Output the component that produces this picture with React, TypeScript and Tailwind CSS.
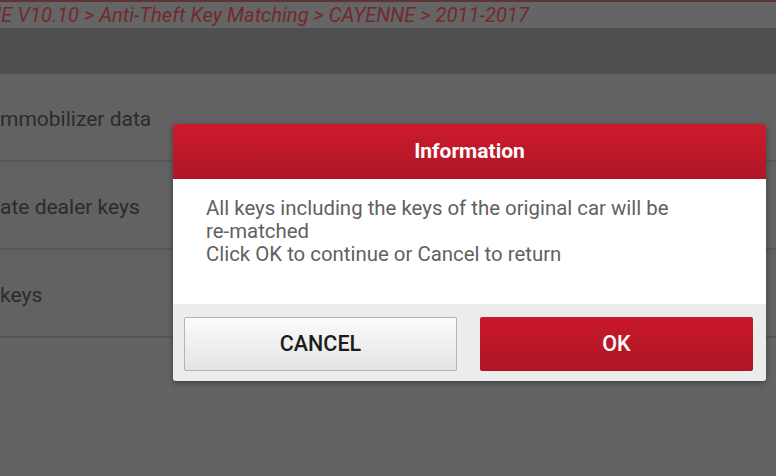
import React from "react";

const rows = ["mmobilizer data", "ate dealer keys", "keys"];

export default function App() {
  return (
    <div
      className="relative h-[476px] w-[776px] overflow-hidden bg-[#636363]"
      style={{ fontFamily: "Roboto, 'Liberation Sans', sans-serif" }}
    >
      {/* top border */}
      <div className="h-[2px] bg-[#5c3434]" />
      {/* breadcrumb bar */}
      <div className="flex h-[26px] items-center overflow-hidden whitespace-nowrap bg-[#656565]">
        <span className="ml-[-4px] text-[20.2px] italic leading-none text-[#722a2d]">
          IE V10.10 &gt; Anti-Theft Key Matching &gt; CAYENNE &gt; 2011-2017
        </span>
      </div>
      {/* dark band */}
      <div className="h-[46px] bg-[#4f4f4f]" />
      {/* menu list */}
      <div className="flex flex-col">
        {rows.map((r) => (
          <div
            key={r}
            className="flex h-[88px] items-center border-b-2 border-[#565656] bg-[#626262] pt-[4px]"
          >
            <span className="whitespace-nowrap text-[21px] leading-none text-[#2b2b2b]">{r}</span>
          </div>
        ))}
      </div>

      {/* dialog */}
      <div className="absolute left-[173px] top-[124px] w-[593px] overflow-hidden rounded-[3px] shadow-[0_2px_6px_rgba(0,0,0,0.35)]">
        <div className="flex h-[55px] items-center justify-center bg-gradient-to-b from-[#cd1b2b] to-[#ae1628]">
          <span className="text-[21px] font-bold text-white">Information</span>
        </div>
        <div className="h-[125px] bg-white px-[33px] pt-[18px] text-[20.4px] leading-[23px] text-[#616161]">
          <p>All keys including the keys of the original car will be</p>
          <p>re-matched</p>
          <p>Click OK to continue or Cancel to return</p>
        </div>
        <div className="flex h-[77px] items-start gap-[23px] bg-[#ececec] px-[11px] pt-[13px]">
          <button className="flex h-[54px] w-[273px] items-center justify-center rounded-[2px] border border-[#b4b4b4] bg-gradient-to-b from-[#fbfbfb] to-[#e4e4e4] text-[21.5px] font-medium text-[#1c1c1c]">
            CANCEL
          </button>
          <button className="flex h-[54px] w-[273px] items-center justify-center rounded-[2px] bg-gradient-to-b from-[#c9192a] to-[#ad1525] text-[21.5px] font-medium text-white">
            OK
          </button>
        </div>
      </div>
    </div>
  );
}
